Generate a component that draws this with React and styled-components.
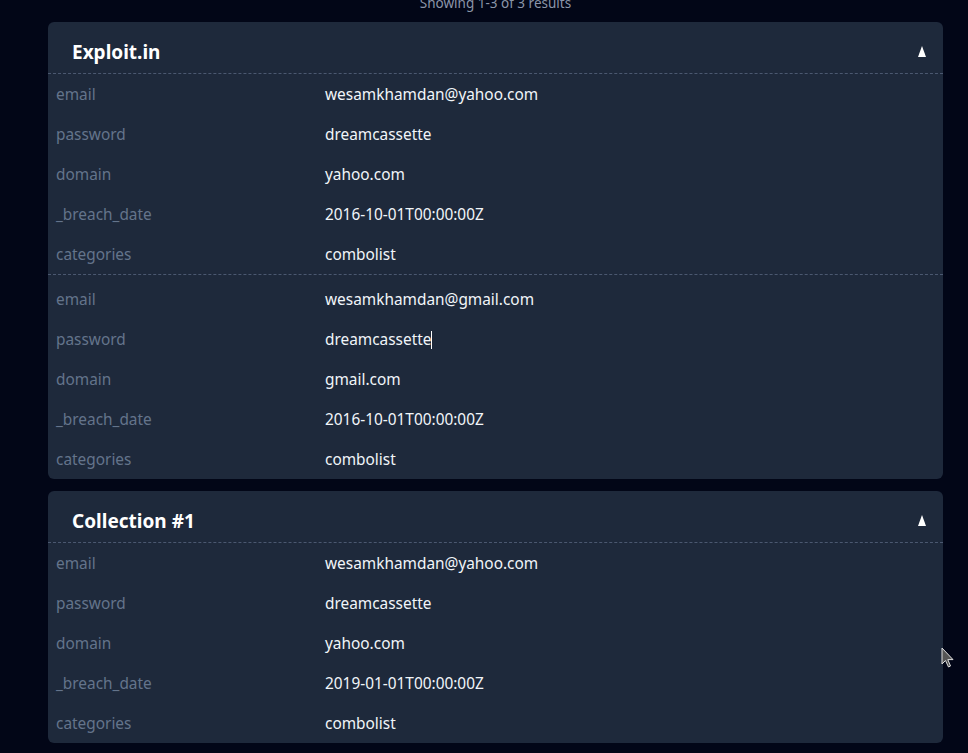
import React from 'react'
import styled, { createGlobalStyle } from 'styled-components'

const results = [
  {
    source: 'Exploit.in',
    records: [
      {
        email: 'wesamkhamdan@yahoo.com',
        password: 'dreamcassette',
        domain: 'yahoo.com',
        _breach_date: '2016-10-01T00:00:00Z',
        categories: 'combolist',
      },
      {
        email: 'wesamkhamdan@gmail.com',
        password: 'dreamcassette',
        domain: 'gmail.com',
        _breach_date: '2016-10-01T00:00:00Z',
        categories: 'combolist',
        caret: 'password',
      },
    ],
  },
  {
    source: 'Collection #1',
    records: [
      {
        email: 'wesamkhamdan@yahoo.com',
        password: 'dreamcassette',
        domain: 'yahoo.com',
        _breach_date: '2019-01-01T00:00:00Z',
        categories: 'combolist',
      },
    ],
  },
]

const fields = ['email', 'password', 'domain', '_breach_date', 'categories']

function App() {
  return (
    <Page>
      <GlobalStyle />
      <Summary>Showing 1-3 of 3 results</Summary>
      <List>
        {results.map((r) => (
          <Card key={r.source}>
            <CardHeader>
              <Title>{r.source}</Title>
              <Toggle />
            </CardHeader>
            {r.records.map((rec, i) => (
              <Record key={i}>
                {fields.map((f) => (
                  <Row key={f}>
                    <Label>{f}</Label>
                    <Value>
                      {rec[f]}
                      {rec.caret === f && <Caret />}
                    </Value>
                  </Row>
                ))}
              </Record>
            ))}
          </Card>
        ))}
      </List>
      <Pointer width="14" height="22" viewBox="0 0 14 22">
        <path d="M1 1 L1 17 L4.5 13.5 L7.5 20 L9.5 19 L6.8 12.6 L12 12.6 Z" fill="#555" stroke="#ddd" strokeWidth="1" />
      </Pointer>
    </Page>
  )
}

///////////////////////////////////////////////////////////////////////////////////

const GlobalStyle = createGlobalStyle`
  html, body {
    margin: 0;
    padding: 0;
    background: #020617;
    height: 100%;
    overflow: hidden;
  }
  body {
    font-family: 'Noto Sans', 'Open Sans', sans-serif;
  }
`

const Page = styled.div`
  position: relative;
  min-height: 753px;
  background: #020617;
  padding: 0 25px 0 48px;
  margin-top: -9px;
`

const Summary = styled.div`
  text-align: center;
  color: #8b95a9;
  font-size: 13.5px;
  line-height: 24px;
  margin-bottom: 7px;
`

const List = styled.div`
  display: flex;
  flex-direction: column;
  gap: 12px;
`

///////////////////////////////////////////////////////////////////////////////////

const Card = styled.section`
  background: #1e293b;
  border-radius: 6px;
  overflow: hidden;
`

const CardHeader = styled.header`
  display: flex;
  align-items: center;
  justify-content: space-between;
  height: 51px;
  padding: 0 17px 0 24px;
  border-bottom: 1px dashed #4b5870;
`

const Title = styled.h2`
  margin: 0;
  padding-top: 8px;
  color: #ffffff;
  font-size: 19px;
  font-weight: 700;
`

const Toggle = styled.span`
  width: 0;
  height: 0;
  margin-top: 8px;
  border-left: 4.5px solid transparent;
  border-right: 4.5px solid transparent;
  border-bottom: 11px solid #ffffff;
`

///////////////////////////////////////////////////////////////////////////////////

const Record = styled.div`
  & + & {
    border-top: 1px dashed #4b5870;
    padding-top: 4px;
  }
`

const Row = styled.div`
  display: grid;
  grid-template-columns: 269px 1fr;
  align-items: center;
  height: 40px;
  padding: 0 8px;
  font-size: 15.4px;
`

const Label = styled.span`
  color: #64748b;
`

const Value = styled.span`
  color: #f1f5f9;
`

const Caret = styled.span`
  display: inline-block;
  width: 1px;
  height: 18px;
  background: #ffffff;
  vertical-align: middle;
`

const Pointer = styled.svg`
  position: absolute;
  left: 941px;
  top: 656px;
`

export default App
